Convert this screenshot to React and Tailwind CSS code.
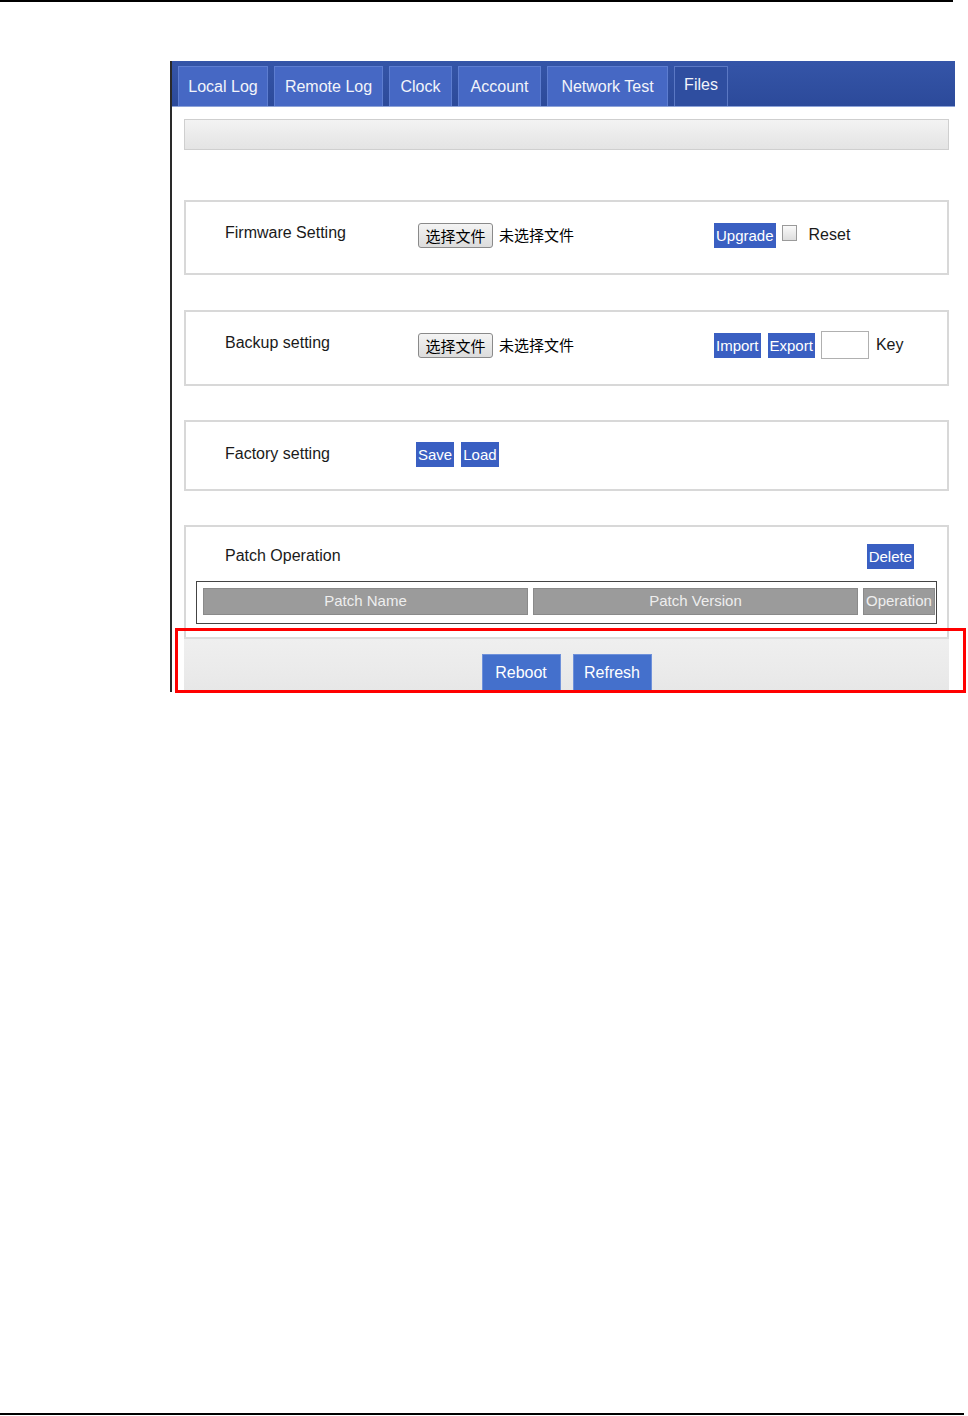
import React from "react";

const tabs = [
  { label: "Local Log", w: "w-[90px]" },
  { label: "Remote Log", w: "w-[109px]" },
  { label: "Clock", w: "w-[63px]" },
  { label: "Account", w: "w-[83px]" },
  { label: "Network Test", w: "w-[121px]" },
  { label: "Files", w: "w-[54px]", active: true },
];

const BlueBtn = ({ children, className = "" }) => (
  <button
    className={`h-[25px] px-[2px] bg-[#3a5fc2] text-white text-[15px] leading-none ${className}`}
  >
    {children}
  </button>
);

const FileBtn = () => (
  <div className="flex items-center gap-[6px]">
    <button className="h-[25px] w-[75px] rounded-[3px] border border-[#8a8a8a] bg-gradient-to-b from-[#f4f4f4] to-[#dcdcdc] text-[15px] leading-none text-black font-['Noto_Sans_CJK_SC',sans-serif]">
      选择文件
    </button>
    <span className="text-[15px] text-black font-['Noto_Sans_CJK_SC',sans-serif]">
      未选择文件
    </span>
  </div>
);

const Box = ({ children, className = "" }) => (
  <div className={`border-2 border-[#d8d8d8] bg-white ${className}`}>{children}</div>
);

export default function App() {
  return (
    <div className="relative w-[968px] h-[1416px] bg-white flex flex-col font-['Liberation_Sans',sans-serif] text-[#1a1a1a]">
      <div className="h-[2px] w-[953px] bg-black" />

      {/* embedded screenshot */}
      <div className="relative ml-[170px] mt-[59px] w-[785px] h-[631px] border-l-2 border-[#2a2a2a] overflow-hidden">
        {/* tab header */}
        <div className="h-[46px] bg-gradient-to-b from-[#3555a8] to-[#2c4a9a] flex items-end gap-[6px] pl-[6px] border-b border-[#8da3d8]">
          {tabs.map((t) => (
            <div
              key={t.label}
              className={`${t.w} h-[40px] flex items-center justify-center text-[16px] text-[#f2f4fa] border border-b-0 ${
                t.active
                  ? "bg-[#2f4ea0] border-[#5b78c4] pb-[4px]"
                  : "bg-[#4668c4] border-[#5d7dd0]"
              }`}
            >
              {t.label}
            </div>
          ))}
        </div>

        <div className="pl-[12px] pr-[6px]">
          <div className="mt-[12px] h-[31px] border border-[#cfcfcf] bg-gradient-to-b from-[#f3f3f3] via-[#ebebeb] to-[#e4e4e4]" />

          <Box className="mt-[50px] h-[75px] pt-[20px]">
            <div className="flex items-center h-[26px]">
              <span className="w-[232px] pl-[39px] text-[16px] -mt-[4px]">Firmware Setting</span>
              <div className="w-[296px]">
                <FileBtn />
              </div>
              <BlueBtn>Upgrade</BlueBtn>
              <span className="ml-[6px] w-[15px] h-[16px] -mt-[4px] border border-[#9a9a9a] bg-gradient-to-b from-[#fafafa] to-[#dedede]" />
              <span className="ml-[12px] text-[16px]">Reset</span>
            </div>
          </Box>

          <Box className="mt-[35px] h-[76px] pt-[19px]">
            <div className="flex items-center h-[28px]">
              <span className="w-[232px] pl-[39px] text-[16px] -mt-[4px]">Backup setting</span>
              <div className="w-[296px]">
                <FileBtn />
              </div>
              <BlueBtn>Import</BlueBtn>
              <BlueBtn className="ml-[7px]">Export</BlueBtn>
              <div className="ml-[6px] w-[48px] h-[28px] border border-[#b0b0b0] bg-white" />
              <span className="ml-[7px] text-[16px]">Key</span>
            </div>
          </Box>

          <Box className="mt-[34px] h-[71px] pt-[19px]">
            <div className="flex items-center h-[26px]">
              <span className="w-[230px] pl-[39px] text-[16px]">Factory setting</span>
              <BlueBtn>Save</BlueBtn>
              <BlueBtn className="ml-[7px]">Load</BlueBtn>
            </div>
          </Box>

          <Box className="mt-[34px] h-[120px] pt-[16px] px-[10px]">
            <div className="flex items-center justify-between h-[26px]">
              <span className="pl-[29px] text-[16px]">Patch Operation</span>
              <BlueBtn className="mr-[23px]">Delete</BlueBtn>
            </div>
            <div className="mt-[12px] h-[43px] border border-[#444] p-[6px] pb-[8px] flex gap-[5px] overflow-hidden">
              <div className="w-[325px] shrink-0 bg-[#9b9b9b] border border-[#8a8a8a] flex items-center justify-center text-[15px] text-[#eeeeee]">
                Patch Name
              </div>
              <div className="w-[325px] shrink-0 bg-[#9b9b9b] border border-[#8a8a8a] flex items-center justify-center text-[15px] text-[#eeeeee]">
                Patch Version
              </div>
              <div className="w-[72px] shrink-0 bg-[#9b9b9b] border border-[#8a8a8a] flex items-center pl-[2px] text-[15px] text-[#eeeeee] whitespace-nowrap">
                Operation
              </div>
            </div>
          </Box>

          <div className="-mt-[8px] h-[60px] border-t-2 border-[#dcdcdc] bg-gradient-to-b from-[#efefef] via-[#ebebeb] to-[#e6e6e6] flex justify-center gap-[12px] pt-[15px]">
            <button className="w-[79px] h-[40px] bg-[#4470cc] border border-[#6f91da] text-white text-[16px] pb-[3px]">
              Reboot
            </button>
            <button className="w-[79px] h-[40px] bg-[#4470cc] border border-[#6f91da] text-white text-[16px] pb-[3px]">
              Refresh
            </button>
          </div>
        </div>
      </div>

      {/* red highlight annotation */}
      <div className="absolute left-[175px] top-[628px] w-[791px] h-[65px] border-[3px] border-[#ff0000]" />

      <div className="mt-auto h-[2px] w-[964px] bg-black mb-[1px]" />
    </div>
  );
}
